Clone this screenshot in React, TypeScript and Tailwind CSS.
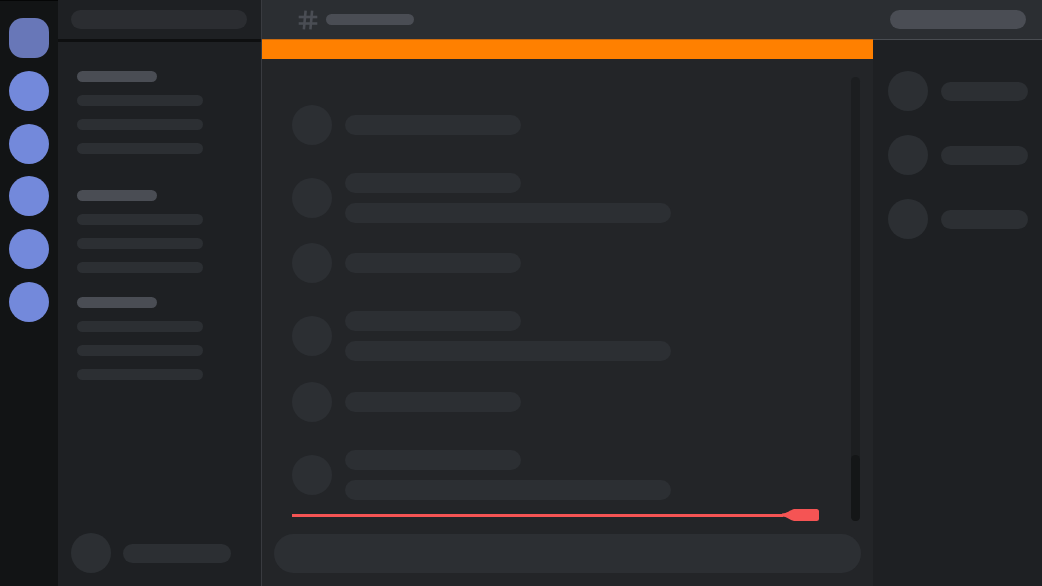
const Bar = ({ className }: { className: string }) => (
  <div className={`rounded-full ${className}`} />
);

const Avatar = ({ className = "bg-[#2c2f33]" }: { className?: string }) => (
  <div className={`w-10 h-10 rounded-full shrink-0 ${className}`} />
);

// one message group: avatar + one or two lines
const Message = ({ lines, className = "" }: { lines: number; className?: string }) => (
  <div className={`flex items-center gap-[13px] ${className}`}>
    <Avatar />
    <div className="flex flex-col gap-[10px]">
      <Bar className="w-[176px] h-[20px] bg-[#2c2f33]" />
      {lines > 1 && <Bar className="w-[326px] h-[20px] bg-[#2c2f33]" />}
    </div>
  </div>
);

const ChannelGroup = ({ className = "" }: { className?: string }) => (
  <div className={`flex flex-col ${className}`}>
    <Bar className="w-[80px] h-[11px] bg-[#4a4d54]" />
    <div className="flex flex-col gap-[13px] mt-[13px]">
      <Bar className="w-[126px] h-[11px] bg-[#2c2f33]" />
      <Bar className="w-[126px] h-[11px] bg-[#2c2f33]" />
      <Bar className="w-[126px] h-[11px] bg-[#2c2f33]" />
    </div>
  </div>
);

export default function App() {
  return (
    <div className="w-[1042px] h-[586px] flex overflow-hidden bg-[#232528] font-['Liberation_Sans',sans-serif]">
      {/* Server rail */}
      <div className="w-[58px] shrink-0 bg-[#121415] border-t border-[#050606] flex flex-col items-center pt-[17px] gap-[12.8px]">
        <div className="w-10 h-10 rounded-[14px] bg-[#6877b8]" />
        <div className="w-10 h-10 rounded-full bg-[#7389db]" />
        <div className="w-10 h-10 rounded-full bg-[#7389db]" />
        <div className="w-10 h-10 rounded-full bg-[#7389db]" />
        <div className="w-10 h-10 rounded-full bg-[#7389db]" />
        <div className="w-10 h-10 rounded-full bg-[#7389db]" />
      </div>

      {/* Channel sidebar */}
      <div className="w-[204px] shrink-0 bg-[#1e2023] border-r border-[#393b40] flex flex-col">
        <div className="h-[42px] shrink-0 flex items-center px-[13px] border-b-[3px] border-[#0e0f10]">
          <Bar className="w-[176px] h-[19px] bg-[#2b2d31]" />
        </div>
        <div className="flex-1 flex flex-col pl-[19px] pt-[29px]">
          <ChannelGroup />
          <ChannelGroup className="mt-[36px]" />
          <ChannelGroup className="mt-[24px]" />
        </div>
        <div className="flex items-center gap-[12px] px-[13px] pb-[13px]">
          <Avatar />
          <Bar className="w-[108px] h-[19px] bg-[#2c2f33]" />
        </div>
      </div>

      {/* Main + members */}
      <div className="flex-1 flex flex-col">
        {/* Top header */}
        <div className="h-[39px] shrink-0 bg-[#2b2e32] flex items-center">
          <div className="w-[611px] flex items-center pl-[36px] gap-[8px]">
            <svg width="20" height="20" viewBox="0 0 20 20" fill="none" stroke="#4a4d54" strokeWidth="2.6" strokeLinecap="square">
              <line x1="2" y1="7" x2="18" y2="7" />
              <line x1="2" y1="13.5" x2="18" y2="13.5" />
              <line x1="7.5" y1="2" x2="6" y2="18" />
              <line x1="14" y1="2" x2="12.5" y2="18" />
            </svg>
            <Bar className="w-[88px] h-[11px] bg-[#4a4d54]" />
          </div>
          <div className="flex-1 h-full flex items-center justify-end pr-[16px]">
            <Bar className="w-[136px] h-[19px] bg-[#4a4d54]" />
          </div>
        </div>

        <div className="flex-1 flex">
          {/* Chat column */}
          <div className="w-[611px] shrink-0 flex flex-col">
            <div className="h-[20px] shrink-0 bg-[#ff8000] border-t border-[#c86a10]" />
            <div className="flex-1 flex pt-[18px]">
              <div className="flex-1 flex flex-col pl-[30px] pt-[28px]">
                <Message lines={1} />
                <Message lines={2} className="mt-[28px]" />
                <Message lines={1} className="mt-[20px]" />
                <Message lines={2} className="mt-[28px]" />
                <Message lines={1} className="mt-[21px]" />
                <Message lines={2} className="mt-[28px]" />
                {/* slider */}
                <div className="mt-auto flex items-center h-[12px] w-[527px]">
                  <div className="flex-1 h-[3px] bg-[#f55454]" />
                  <svg width="37" height="12" viewBox="0 0 37 12" className="shrink-0 -ml-px">
                    <path d="M0 4.5 C5 4.5 8 1 12 0 L34.5 0 Q37 0 37 2.5 L37 9.5 Q37 12 34.5 12 L12 12 C8 11 5 7.5 0 7.5 Z" fill="#f55454" />
                  </svg>
                </div>
              </div>
              {/* scrollbar */}
              <div className="w-[9px] mr-[13px] ml-[32px] h-[444px] rounded-full bg-[#1c1e20] flex flex-col justify-end">
                <div className="h-[66px] rounded-full bg-[#141617]" />
              </div>
            </div>
            <div className="px-[12px] pt-[13px] pb-[13px]">
              <div className="h-[39px] rounded-full bg-[#2c2f33]" />
            </div>
          </div>

          {/* Members */}
          <div className="flex-1 bg-[#1e2023] border-t border-[#4a4d52] flex flex-col gap-[24px] pl-[15px] pt-[31px]">
            {[0, 1, 2].map((i) => (
              <div key={i} className="flex items-center gap-[13px]">
                <Avatar />
                <Bar className="w-[87px] h-[19px] bg-[#2c2f33]" />
              </div>
            ))}
          </div>
        </div>
      </div>
    </div>
  );
}
